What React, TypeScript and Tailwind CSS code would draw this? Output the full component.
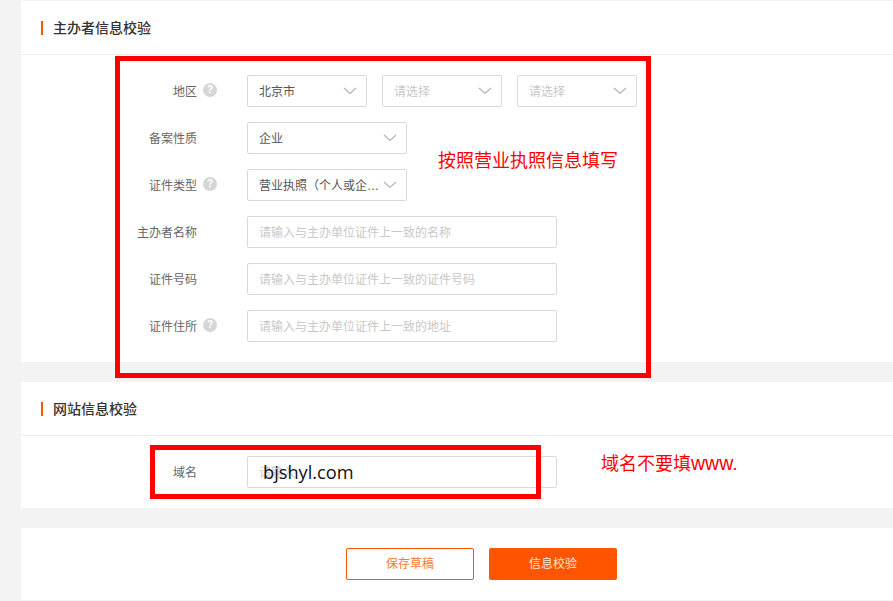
import React from "react";

const FONT = "font-['Liberation_Sans','Noto_Sans_CJK_SC',sans-serif]";

function Chevron() {
  return (
    <svg width="14" height="8" viewBox="0 0 14 8" fill="none" className="shrink-0">
      <path d="M1 1l6 5.5L13 1" stroke="#b5b5b5" strokeWidth="1.2" />
    </svg>
  );
}

function Help() {
  return (
    <span className="flex h-[14px] w-[14px] items-center justify-center rounded-full bg-[#d6d6d6] text-[10px] font-bold leading-none text-white">
      ?
    </span>
  );
}

function Select({ value, width, placeholder }: { value: string; width: string; placeholder?: boolean }) {
  return (
    <div className={`flex h-8 items-center justify-between rounded-[2px] border border-[#d9d9d9] bg-white pl-[11px] pr-[9px] text-xs ${width}`}>
      <span className={`truncate pt-[2px] ${placeholder ? "text-[#c8c8c8]" : "text-[#555]"}`}>{value}</span>
      <Chevron />
    </div>
  );
}

function Input({ placeholder }: { placeholder: string }) {
  return (
    <div className="flex h-8 w-[310px] items-center rounded-[2px] border border-[#d9d9d9] bg-white pl-[11px] pt-[2px] text-xs text-[#c8c8c8]">
      {placeholder}
    </div>
  );
}

function Row({ label, help, children }: { label: string; help?: boolean; children: React.ReactNode }) {
  return (
    <div className="flex items-center">
      <div className="w-[176px] pt-[2px] text-right text-xs text-[#666]">{label}</div>
      <div className="w-[50px] pb-[2px] pl-1.5">{help && <Help />}</div>
      {children}
    </div>
  );
}

function Header({ title }: { title: string }) {
  return (
    <div className="flex h-[54px] items-center border-b border-[#eee] pl-5">
      <span className="mr-2.5 h-[14px] w-[2px] bg-[#ff5500]" />
      <h2 className="text-sm font-medium text-[#333]">{title}</h2>
    </div>
  );
}

export default function App() {
  return (
    <div className={`relative h-[601px] w-[893px] overflow-hidden bg-[#f3f3f3] pl-[21px] pt-px ${FONT}`}>
      <section className="h-[361px] bg-white">
        <Header title="主办者信息校验" />
        <div className="flex flex-col gap-[15px] pt-5">
          <Row label="地区" help>
            <div className="flex gap-[15px]">
              <Select value="北京市" width="w-[120px]" />
              <Select value="请选择" width="w-[120px]" placeholder />
              <Select value="请选择" width="w-[120px]" placeholder />
            </div>
          </Row>
          <Row label="备案性质">
            <Select value="企业" width="w-[160px]" />
          </Row>
          <Row label="证件类型" help>
            <Select value="营业执照（个人或企业）" width="w-[160px]" />
          </Row>
          <Row label="主办者名称">
            <Input placeholder="请输入与主办单位证件上一致的名称" />
          </Row>
          <Row label="证件号码">
            <Input placeholder="请输入与主办单位证件上一致的证件号码" />
          </Row>
          <Row label="证件住所" help>
            <Input placeholder="请输入与主办单位证件上一致的地址" />
          </Row>
        </div>
      </section>

      <section className="mt-5 h-[126px] bg-white">
        <Header title="网站信息校验" />
        <div className="pt-5">
          <Row label="域名">
            <Input placeholder="请输入" />
          </Row>
        </div>
      </section>

      <section className="mt-5 flex h-[72px] items-center gap-[15px] bg-white pl-[325px]">
        <button className="h-8 w-[128px] rounded-[2px] border border-[#ff5500] bg-white text-xs text-[#ff7733]">保存草稿</button>
        <button className="h-8 w-[128px] rounded-[2px] bg-[#ff5500] text-xs text-[#ffe6d9]">信息校验</button>
      </section>

      {/* annotations drawn on top of the screenshot */}
      <div className="absolute left-[115px] top-[56px] h-[322px] w-[536px] border-[5px] border-[#ff0000]" />
      <div className="absolute left-[150px] top-[445px] h-[54px] w-[391px] border-[5px] border-[#ff0000]" />
      <div className="absolute left-[438px] top-[150px] text-[18px] leading-[22px] text-[#ff0000]">按照营业执照信息填写</div>
      <div className="absolute left-[601px] top-[452px] text-[18px] leading-[22px] text-[#ff0000]">域名不要填<span className="text-[19.5px]">www.</span></div>
      <div className="absolute left-[263px] top-[460px] font-['Open_Sans',sans-serif] text-[18.2px] leading-[24px] text-[#111]">bjshyl.com</div>
    </div>
  );
}
